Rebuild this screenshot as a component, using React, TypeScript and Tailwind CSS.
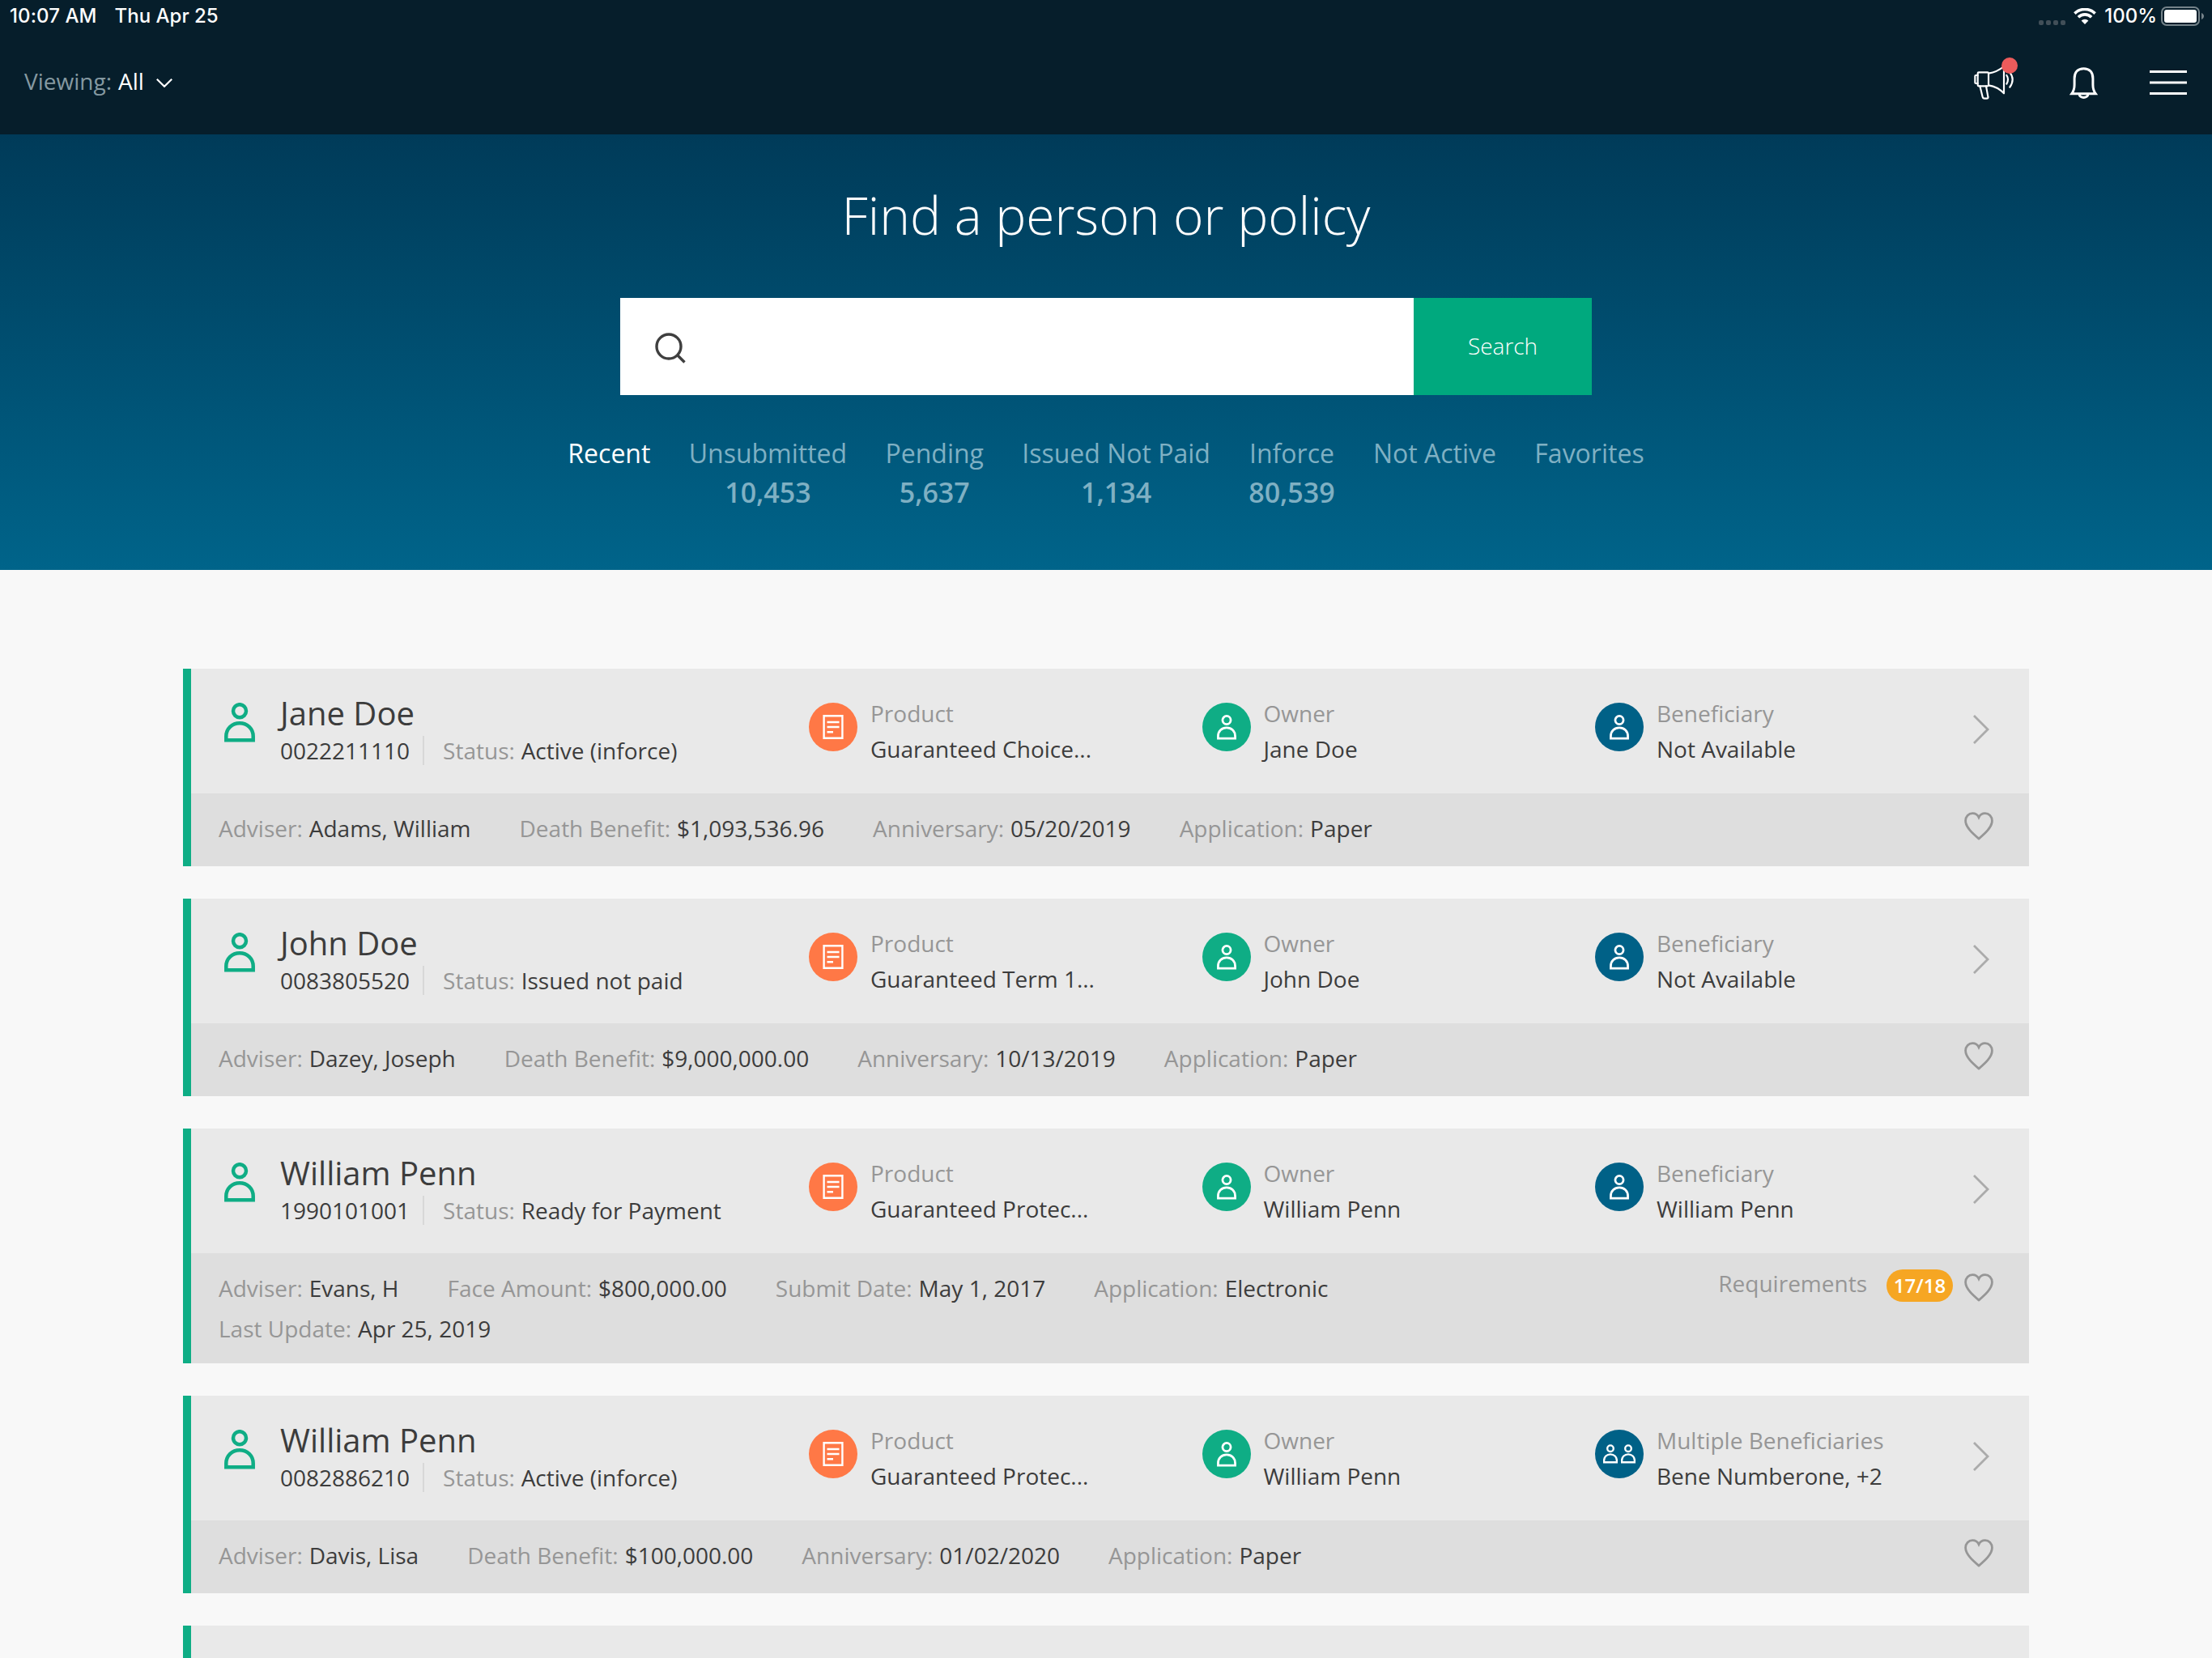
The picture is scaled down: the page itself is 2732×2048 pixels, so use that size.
import type { ReactNode } from "react";

type Field = { label: string; value: string };

type Policy = {
  name: string;
  number: string;
  status: string;
  product: string;
  owner: string;
  beneficiaryLabel?: string;
  beneficiary: string;
  multiple?: boolean;
  details: Field[];
  requirements?: string;
};

const tabs = [
  { label: "Recent", active: true },
  { label: "Unsubmitted", count: "10,453" },
  { label: "Pending", count: "5,637" },
  { label: "Issued Not Paid", count: "1,134" },
  { label: "Inforce", count: "80,539" },
  { label: "Not Active" },
  { label: "Favorites" },
];

const policies: Policy[] = [
  {
    name: "Jane Doe",
    number: "0022211110",
    status: "Active (inforce)",
    product: "Guaranteed Choice...",
    owner: "Jane Doe",
    beneficiary: "Not Available",
    details: [
      { label: "Adviser", value: "Adams, William" },
      { label: "Death Benefit", value: "$1,093,536.96" },
      { label: "Anniversary", value: "05/20/2019" },
      { label: "Application", value: "Paper" },
    ],
  },
  {
    name: "John Doe",
    number: "0083805520",
    status: "Issued not paid",
    product: "Guaranteed Term 1...",
    owner: "John Doe",
    beneficiary: "Not Available",
    details: [
      { label: "Adviser", value: "Dazey, Joseph" },
      { label: "Death Benefit", value: "$9,000,000.00" },
      { label: "Anniversary", value: "10/13/2019" },
      { label: "Application", value: "Paper" },
    ],
  },
  {
    name: "William Penn",
    number: "1990101001",
    status: "Ready for Payment",
    product: "Guaranteed Protec...",
    owner: "William Penn",
    beneficiary: "William Penn",
    details: [
      { label: "Adviser", value: "Evans, H" },
      { label: "Face Amount", value: "$800,000.00" },
      { label: "Submit Date", value: "May 1, 2017" },
      { label: "Application", value: "Electronic" },
      { label: "Last Update", value: "Apr 25, 2019" },
    ],
    requirements: "17/18",
  },
  {
    name: "William Penn",
    number: "0082886210",
    status: "Active (inforce)",
    product: "Guaranteed Protec...",
    owner: "William Penn",
    beneficiaryLabel: "Multiple Beneficiaries",
    beneficiary: "Bene Numberone, +2",
    multiple: true,
    details: [
      { label: "Adviser", value: "Davis, Lisa" },
      { label: "Death Benefit", value: "$100,000.00" },
      { label: "Anniversary", value: "01/02/2020" },
      { label: "Application", value: "Paper" },
    ],
  },
];

function PersonIcon({ className, stroke }: { className: string; stroke: number }) {
  return (
    <svg viewBox="0 0 38 49" className={className} fill="none" stroke="currentColor" strokeWidth={stroke}>
      <circle cx="19" cy="10.2" r="8" />
      <path d="M2.3 46.2V41.5C2.3 32 9.5 25.2 19 25.2S35.7 32 35.7 41.5V46.2Z" />
    </svg>
  );
}

function DocIcon() {
  return (
    <svg viewBox="0 0 26 30" className="h-[30px] w-[26px]" fill="none" stroke="white" strokeWidth="2.4">
      <path d="M1.6 1.2H24.4V28.8H1.6Z" />
      <path d="M5.5 9H20.5M5.5 15H20.5M5.5 21.2H13" />
    </svg>
  );
}

function HeartIcon() {
  return (
    <svg viewBox="0 0 36 35" className="h-[35px] w-[36px]" fill="none" stroke="#969696" strokeWidth="2.8">
      <path d="M18 33C11 27 1.6 19 1.6 10.8C1.6 5.5 5.5 1.6 10.2 1.6C13.5 1.6 16.5 3.4 18 6.6C19.5 3.4 22.5 1.6 25.8 1.6C30.5 1.6 34.4 5.5 34.4 10.8C34.4 19 25 27 18 33Z" />
    </svg>
  );
}

function StatusBar() {
  return (
    <div className="flex h-[38px] items-center justify-between pl-3 pr-[9px] pt-[2px] font-['Inter',sans-serif] text-[24px] font-medium leading-[36px] text-white">
      <div className="flex gap-[22px]">
        <span className="tracking-[0.1px]">10:07 AM</span>
        <span>Thu Apr 25</span>
      </div>
      <div className="flex items-center">
        <div className="mr-[10px] mt-4 flex gap-[3px]">
          {[0, 1, 2, 3].map((i) => (
            <span key={i} className="size-[6px] rounded-[2px] bg-[#414f58]" />
          ))}
        </div>
        <svg viewBox="0 0 28 20" className="mr-[10px] h-5 w-7" fill="none" stroke="white" strokeWidth="3.6">
          <path d="M1.4 6.6A18 18 0 0 1 26.6 6.6" />
          <path d="M5.9 11.2A11.6 11.6 0 0 1 22.1 11.2" />
          <path d="M14 20L9.6 15.6A6.2 6.2 0 0 1 18.4 15.6Z" fill="white" stroke="none" />
        </svg>
        <span>100%</span>
        <svg viewBox="0 0 54 24" className="ml-[5px] h-6 w-[54px]">
          <rect x="1" y="1" width="46" height="22" rx="6" fill="none" stroke="#75838a" strokeWidth="2" />
          <rect x="4" y="4" width="40" height="16" rx="3" fill="white" />
          <path d="M50 8C54 9.5 54 14.5 50 16Z" fill="#75838a" />
        </svg>
      </div>
    </div>
  );
}

function NavBar() {
  return (
    <div className="flex h-[124px] items-center justify-between pl-[30px] pr-[31px]">
      <div className="flex items-center text-[28px] leading-[40px] text-white">
        <span className="mr-2 text-[#8599a1]">Viewing:</span>
        <span>All</span>
        <svg viewBox="0 0 20 11" className="ml-[15px] mt-1 h-[11px] w-5" fill="none" stroke="white" strokeWidth="2.2">
          <path d="M0.8 0.8L10 9.8L19.2 0.8" />
        </svg>
      </div>
      <div className="flex items-center pt-1">
        <div className="relative">
          <svg viewBox="0 0 150 126" className="h-[42px] w-[50px]" fill="none" stroke="white" strokeWidth="6.5" strokeLinejoin="round" strokeLinecap="round">
            <rect x="14" y="25" width="40" height="51" rx="4" />
            <path d="M14 36H7Q4 36 4 39V63Q4 66 7 66H14" />
            <path d="M54 29Q86 24 111 3V103Q88 78 54 73" />
            <path d="M22 76L32 116Q33 122 39 122H47Q54 122 52 115L45 76" />
            <path d="M121 36Q131 51 121 68" />
            <path d="M133 26Q153 50 133 80" />
          </svg>
          <span className="absolute -top-[10px] left-[34px] size-5 rounded-full bg-[#ec5b5b]" />
        </div>
        <svg viewBox="0 0 105 118" className="ml-[68px] h-[39px] w-[35px]" fill="none" stroke="white" strokeWidth="9">
          <path d="M8 99Q18 86 18 66V42C18 18 31 5 52.5 5S87 18 87 42V66Q87 86 97 99Z" />
          <path d="M36 100C37 118 68 118 69 100" />
        </svg>
        <svg viewBox="0 0 46 30" className="ml-16 h-[30px] w-[46px]" stroke="white" strokeWidth="2.8">
          <path d="M0 1.5H46M0 15H46M0 28.5H46" />
        </svg>
      </div>
    </div>
  );
}

function Hero() {
  return (
    <section className="flex h-[538px] flex-col items-center bg-linear-to-b from-[#003b59] to-[#00648a]">
      <h1 className="mt-14 text-[64px] font-light leading-[88px] text-white">Find a person or policy</h1>
      <div className="mt-[58px] flex h-[120px] w-[1200px]">
        <div className="flex flex-1 items-center bg-white pl-[43px]">
          <svg viewBox="0 0 38 38" className="mt-1 size-[38px]" fill="none" stroke="#3f3f3f" strokeWidth="3.4">
            <circle cx="17" cy="17" r="15" />
            <path d="M27.5 27.5L36.5 36.5" />
          </svg>
        </div>
        <button className="w-[220px] bg-[#00a97e] pb-[2px] text-[28px] font-light text-white">Search</button>
      </div>
      <nav className="mt-12 flex gap-[47.3px]">
        {tabs.map((t) => (
          <div key={t.label} className="flex flex-col items-center text-[32px] leading-[48px] text-[#7fb0c3]">
            <span className={t.active ? "text-white" : ""}>{t.label}</span>
            {t.count && <span className="text-[34px] font-semibold">{t.count}</span>}
          </div>
        ))}
      </nav>
    </section>
  );
}

function Party({ icon, color, label, value }: { icon: ReactNode; color: string; label: string; value: string }) {
  return (
    <div className="flex w-[485.5px] shrink-0 pt-[42px]">
      <div className={`mr-4 flex size-[60px] shrink-0 items-center justify-center rounded-full text-white ${color}`}>{icon}</div>
      <div className="-mt-[9px] text-[28px] leading-[44px]">
        <div className="text-[#969696]">{label}</div>
        <div className="text-[#3c3c3c]">{value}</div>
      </div>
    </div>
  );
}

function PolicyCard({ policy }: { policy: Policy }) {
  return (
    <article className="border-l-[10px] border-[#0fad85]">
      <div className="flex h-[154px] bg-[#e9e9e9]">
        <div className="flex w-[763px] shrink-0 pl-[41px] pt-[42px]">
          <PersonIcon className="mr-[31px] h-[49px] w-[38px] shrink-0 text-[#0fad85]" stroke={4.5} />
          <div className="-mt-[15px] text-[#3c3c3c]">
            <h2 className="text-[40px] leading-[56px]">{policy.name}</h2>
            <div className="-mt-[2px] flex items-center text-[28px] leading-[40px]">
              <span>{policy.number}</span>
              <span className="ml-4 mr-[23px] h-9 w-[2px] bg-[#d8d8d8]" />
              <span>
                <span className="mr-[0.5px] text-[#969696]">Status:</span> {policy.status}
              </span>
            </div>
          </div>
        </div>
        <Party icon={<DocIcon />} color="bg-[#ff7846]" label="Product" value={policy.product} />
        <Party
          icon={<PersonIcon className="h-[31px] w-6" stroke={4.4} />}
          color="bg-[#0fad85]"
          label="Owner"
          value={policy.owner}
        />
        <Party
          icon={
            policy.multiple ? (
              <div className="flex gap-1">
                <PersonIcon className="h-6 w-[18px]" stroke={5} />
                <PersonIcon className="h-6 w-[18px]" stroke={5} />
              </div>
            ) : (
              <PersonIcon className="h-[31px] w-6" stroke={4.4} />
            )
          }
          color="bg-[#006187]"
          label={policy.beneficiaryLabel ?? "Beneficiary"}
          value={policy.beneficiary}
        />
        <svg viewBox="0 0 20 36" className="-ml-[19px] mt-[57px] h-9 w-5 shrink-0" fill="none" stroke="#ababab" strokeWidth="2.8">
          <path d="M1 1L18 18L1 35" />
        </svg>
      </div>
      <div className="flex min-h-[90px] justify-between bg-[#dedede] pb-[18px] pl-[34px] pr-11 pt-[18px]">
        <div className="flex max-w-[1640px] flex-wrap gap-x-[60px] text-[28px] leading-[50px] text-[#3c3c3c]">
          {policy.details.map((d) => (
            <span key={d.label}>
              <span className="mr-[0.7px] text-[#969696]">{d.label}:</span> {d.value}
            </span>
          ))}
        </div>
        {policy.requirements ? (
          <div className="mt-[2px] flex h-10 items-center text-[28px] leading-[40px]">
            <span className="-mt-[6px] mr-6 text-[#969696]">Requirements</span>
            <span className="mr-[14px] w-[82px] rounded-full bg-[#f6a623] text-center text-[24px] font-semibold text-white">
              {policy.requirements}
            </span>
            <span className="mt-1">
              <HeartIcon />
            </span>
          </div>
        ) : (
          <div className="pt-[5px]">
            <HeartIcon />
          </div>
        )}
      </div>
    </article>
  );
}

export default function App() {
  return (
    <div className="h-[2048px] w-[2732px] overflow-hidden bg-[#f8f8f8] font-['Open_Sans',sans-serif]">
      <header className="h-[166px] bg-[#061e2b]">
        <StatusBar />
        <NavBar />
      </header>
      <Hero />
      <main className="mx-auto mt-[122px] flex w-[2280px] flex-col gap-10">
        {policies.map((p) => (
          <PolicyCard key={p.number} policy={p} />
        ))}
        {/* next card, cut off by the bottom of the screen */}
        <div className="h-[154px] border-l-[10px] border-[#0fad85] bg-[#e9e9e9]" />
      </main>
    </div>
  );
}
